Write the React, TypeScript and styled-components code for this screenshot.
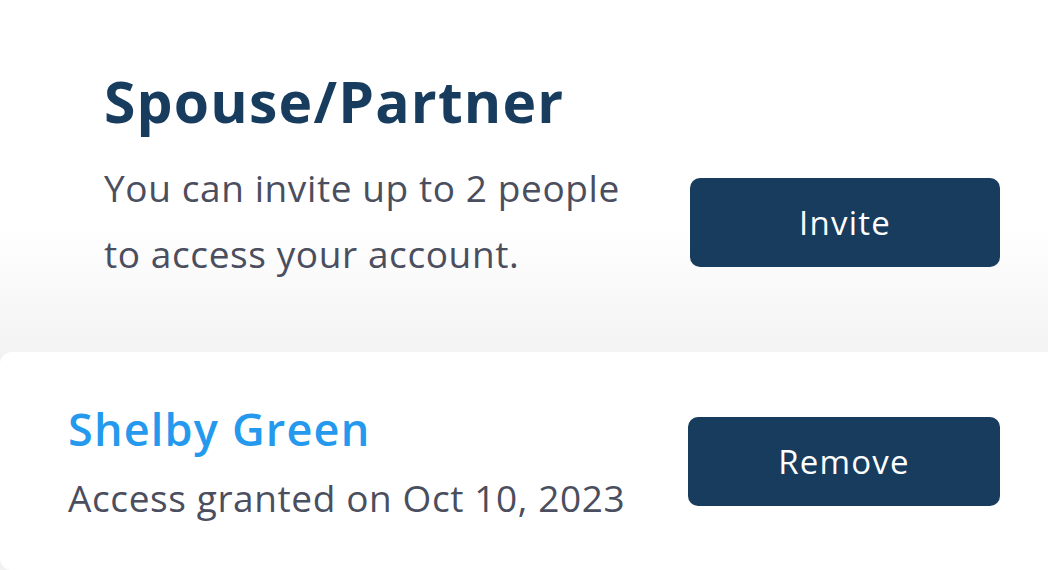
import React from 'react';
import styled, { createGlobalStyle } from 'styled-components';

const GlobalStyle = createGlobalStyle`
  html, body { margin: 0; padding: 0; background: #f2f2f2; overflow: hidden; }
  body { font-family: 'Open Sans', 'Liberation Sans', sans-serif; -webkit-font-smoothing: antialiased; }
`;

const Page = styled.div`
  width: 1048px; height: 570px; display: flex; flex-direction: column; background: #f2f2f2;
`;

const Header = styled.section`
  height: 352px; box-sizing: border-box; padding: 69px 48px 0 104px; display: flex; flex-direction: column;
  background: linear-gradient(to bottom, #ffffff 0%, #ffffff 64%, #f3f3f3 100%);
`;

const Title = styled.h1`
  margin: 0; font-size: 57px; line-height: 64px; font-weight: 700; color: #173c5e; letter-spacing: 1.2px;
`;

const Row = styled.div`
  display: flex; align-items: center; justify-content: space-between; margin-top: 22px;
`;

const Text = styled.p`
  margin: 0; width: 545px; font-size: 37px; line-height: 66px; color: #4a4e5e; letter-spacing: 0.6px;
`;

const Button = styled.button<{ $width: number; $shift?: number }>`
  width: ${(p) => p.$width}px; height: 89px; margin-top: ${(p) => p.$shift || 0}px; border: none; border-radius: 10px;
  background: #173c5e; color: #fff; font-family: inherit; font-size: 33px; letter-spacing: 1.2px; cursor: pointer;
`;

const Card = styled.section`
  flex: 1; background: #fff; border-radius: 12px 0 0 12px; box-sizing: border-box; padding: 0 48px 0 68px;
  display: flex; align-items: center; justify-content: space-between;
`;

const Person = styled.div`
  display: flex; flex-direction: column; gap: 21px;
`;

const Name = styled.div`
  font-size: 45px; line-height: 52px; font-weight: 600; color: #2499ee; letter-spacing: 1.2px;
`;

const Granted = styled.div`
  font-size: 37px; line-height: 44px; color: #4a4e5e; letter-spacing: 0.6px;
`;

const App = () => (
  <Page>
    <GlobalStyle />
    <Header>
      <Title>Spouse/Partner</Title>
      <Row>
        <Text>You can invite up to 2 people to access your account.</Text>
        <Button $width={310} $shift={3}>Invite</Button>
      </Row>
    </Header>
    <Card>
      <Person>
        <Name>Shelby Green</Name>
        <Granted>Access granted on Oct 10, 2023</Granted>
      </Person>
      <Button $width={312}>Remove</Button>
    </Card>
  </Page>
);

export default App;
